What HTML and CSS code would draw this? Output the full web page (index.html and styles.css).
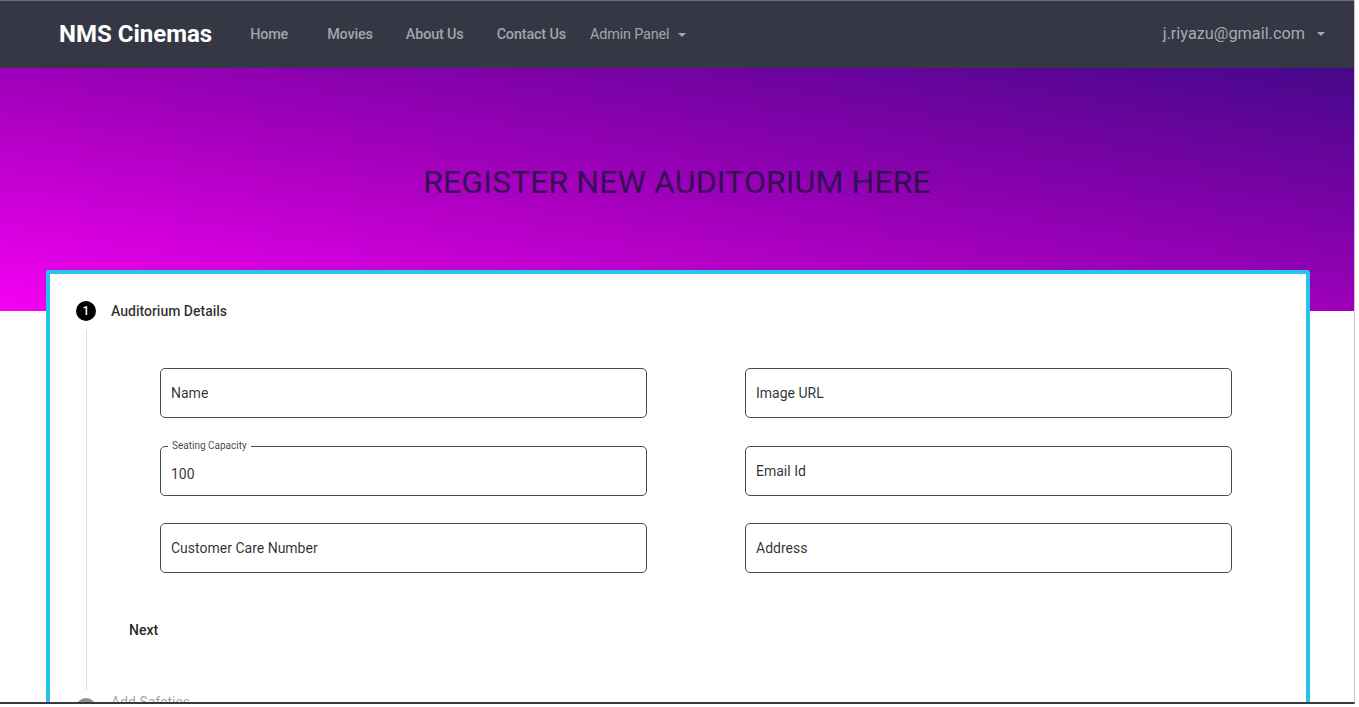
FILE: index.html
```html
<!DOCTYPE html>
<html lang="en">
<head>
<meta charset="utf-8">
<title>NMS Cinemas - Register Auditorium</title>
<link rel="stylesheet" href="styles.css">
</head>
<body>
<div class="frame">
  <nav class="navbar">
    <a class="brand" href="#">NMS Cinemas</a>
    <ul class="nav-links">
      <li class="item-home"><a class="nav-link strong" href="#">Home</a></li>
      <li class="item-movies"><a class="nav-link strong" href="#">Movies</a></li>
      <li class="item-about"><a class="nav-link strong" href="#">About Us</a></li>
      <li class="item-contact"><a class="nav-link strong" href="#">Contact Us</a></li>
      <li><a class="nav-link dropdown" href="#">Admin Panel<span class="caret"></span></a></li>
    </ul>
    <a class="nav-user dropdown" href="#">j.riyazu@gmail.com<span class="caret"></span></a>
  </nav>

  <header class="hero">
    <h1 class="hero-title">REGISTER NEW AUDITORIUM HERE</h1>
  </header>

  <main class="card">
    <div class="step-header">
      <span class="step-icon">1</span>
      <span class="step-label">Auditorium Details</span>
    </div>
    <div class="step-body">
      <form class="form-grid">
        <div class="field"><span class="placeholder">Name</span></div>
        <div class="field"><span class="placeholder">Image URL</span></div>
        <div class="field filled">
          <span class="float-label">Seating Capacity</span>
          <span class="value">100</span>
        </div>
        <div class="field"><span class="placeholder">Email Id</span></div>
        <div class="field"><span class="placeholder">Customer Care Number</span></div>
        <div class="field"><span class="placeholder">Address</span></div>
      </form>
      <div class="actions">
        <button class="btn" type="button">Next</button>
      </div>
    </div>
    <div class="step-header inactive">
      <span class="step-icon">2</span>
      <span class="step-label">Add Safeties</span>
    </div>
  </main>
</div>
</body>
</html>
```

FILE: styles.css
```css
* { box-sizing: border-box; }

html, body {
  margin: 0;
  padding: 0;
  background: #ffffff;
  font-family: Roboto, "Liberation Sans", Arial, sans-serif;
}

.frame {
  width: 1355px;
  height: 704px;
  overflow: hidden;
  border-bottom: 2px solid #3a3a3a;
  border-right: 1px solid #c9c9cc;
  background: #ffffff;
}

/* ---------- Navbar ---------- */
.navbar {
  height: 68px;
  background: #353844;
  border-top: 1px solid #6e7078;
  display: flex;
  align-items: center;
  padding: 0 29px 2px 59px;
}

.brand {
  color: #ffffff;
  font-size: 24px;
  font-weight: 700;
  text-decoration: none;
  letter-spacing: 0;
  margin-right: 38px;
}

.nav-links {
  list-style: none;
  margin: 0;
  padding: 0;
  display: flex;
  align-items: center;
  flex: 1;
}

.item-home { margin-right: 39px; }
.item-movies { margin-right: 33px; }
.item-about { margin-right: 33px; }
.item-contact { margin-right: 24px; }

.nav-link {
  color: #a3a4ab;
  font-size: 14.4px;
  text-decoration: none;
  letter-spacing: -0.15px;
}

.nav-link.strong { font-weight: 500; }

.dropdown {
  display: inline-flex;
  align-items: center;
}

.caret {
  display: inline-block;
  width: 0;
  height: 0;
  margin-left: 9px;
  border-left: 4px solid transparent;
  border-right: 4px solid transparent;
  border-top: 4px solid currentColor;
}

.nav-user {
  color: #a9aab0;
  font-size: 16.3px;
  text-decoration: none;
}

.nav-user .caret { margin-left: 12px; }

/* ---------- Hero ---------- */
.hero {
  height: 243px;
  background: linear-gradient(to top right, #f600f2 0%, #a600be 45%, #7a02a6 70%, #45088a 100%);
  display: flex;
  justify-content: center;
  padding-top: 94px;
}

.hero-title {
  margin: 0;
  font-size: 32px;
  font-weight: 400;
  color: rgba(24, 18, 56, 0.8);
  letter-spacing: 0.1px;
  line-height: 40px;
  height: 40px;
}

/* ---------- Card / Stepper ---------- */
.card {
  position: relative;
  margin: -41px 0 0 46px;
  width: 1264px;
  height: 460px;
  background: #ffffff;
  border: 4px solid #27c4ea;
  border-bottom: none;
  border-radius: 3px 3px 0 0;
  padding: 27px 0 0 26px;
}

.step-header {
  display: flex;
  align-items: center;
  height: 20px;
}

.step-icon {
  width: 20px;
  height: 20px;
  border-radius: 50%;
  background: #000000;
  color: #ffffff;
  font-size: 12px;
  font-weight: 500;
  display: flex;
  align-items: center;
  justify-content: center;
  margin-right: 15px;
}

.step-label {
  font-size: 14px;
  font-weight: 500;
  color: rgba(0, 0, 0, 0.82);
}

.step-header.inactive { margin-top: 8px; }
.step-header.inactive .step-icon { background: #8f8f8f; }
.step-header.inactive .step-label {
  color: rgba(0, 0, 0, 0.38);
  font-weight: 400;
  transform: translateY(-6px);
}

.step-body {
  margin: 9px 0 0 10px;
  border-left: 1px solid #dcdcdc;
  padding: 38px 0 40px 26px;
  min-height: 360px;
}

.form-grid {
  margin: 0 0 0 47px;
  width: 1073px;
  display: grid;
  grid-template-columns: 487px 487px;
  column-gap: 98px;
  row-gap: 27.5px;
}

.field {
  position: relative;
  height: 50px;
  border: 1px solid #4a4a4a;
  border-radius: 5px;
  display: flex;
  align-items: center;
  padding: 0 10px;
  font-size: 14px;
  color: rgba(0, 0, 0, 0.82);
}

.field.filled { padding-top: 7px; }

.float-label {
  position: absolute;
  top: -7px;
  left: 7px;
  padding: 0 4px;
  background: #ffffff;
  font-size: 10px;
  line-height: 12px;
  color: rgba(0, 0, 0, 0.75);
}

.actions {
  margin-top: 39px;
}

.btn {
  font-family: inherit;
  font-size: 14px;
  font-weight: 500;
  color: rgba(0, 0, 0, 0.87);
  background: transparent;
  border: none;
  height: 36px;
  padding: 0 16px;
  cursor: pointer;
}
```
